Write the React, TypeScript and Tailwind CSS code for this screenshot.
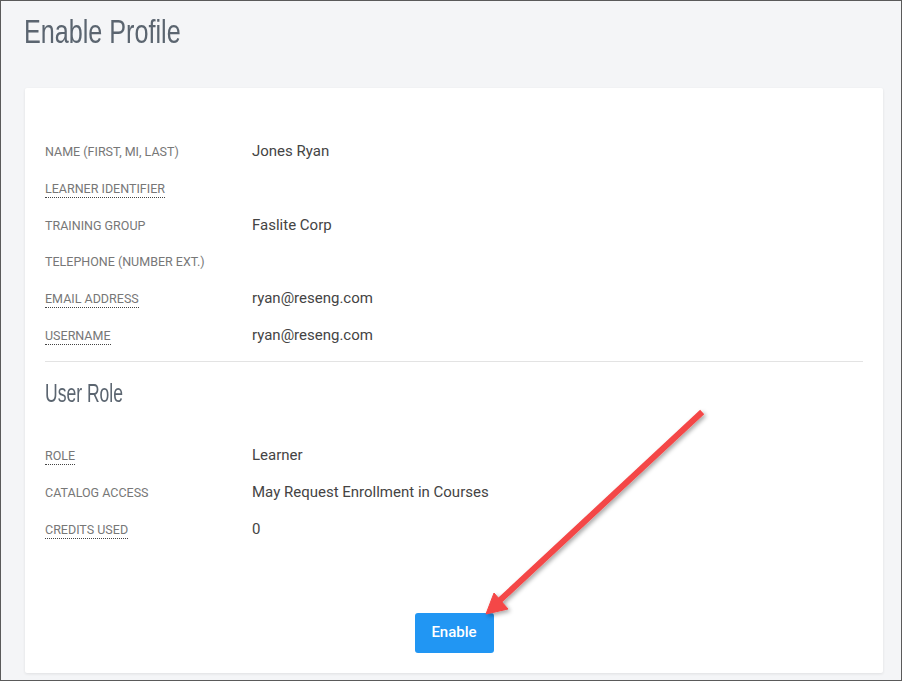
import React from 'react'

const profile = [
  { label: 'Name (First, MI, Last)', value: 'Jones Ryan', tip: false },
  { label: 'Learner Identifier', value: '', tip: true },
  { label: 'Training Group', value: 'Faslite Corp', tip: false },
  { label: 'Telephone (Number Ext.)', value: '', tip: false },
  { label: 'Email Address', value: 'ryan@reseng.com', tip: true },
  { label: 'Username', value: 'ryan@reseng.com', tip: true },
]

const role = [
  { label: 'Role', value: 'Learner', tip: true },
  { label: 'Catalog Access', value: 'May Request Enrollment in Courses', tip: false },
  { label: 'Credits Used', value: '0', tip: true },
]

function Row({ label, value, tip }: { label: string; value: string; tip: boolean }) {
  return (
    <div className="flex h-[36.8px] items-center">
      <div className="w-[207px] shrink-0">
        <span
          className={
            'inline-block text-[12.5px] uppercase leading-[14px] text-[#777] ' +
            (tip ? 'border-b border-dotted border-[#444] pb-[1px]' : 'pb-[2px]')
          }
        >
          {label}
        </span>
      </div>
      <div className="text-[15px] leading-[18px] text-[#444]">{value}</div>
    </div>
  )
}

function Arrow() {
  return (
    <svg className="pointer-events-none absolute inset-0" width="902" height="681">
      <defs>
        <filter id="sh" x="-20%" y="-20%" width="140%" height="140%">
          <feDropShadow dx="2" dy="2" stdDeviation="2" floodColor="#000" floodOpacity="0.35" />
        </filter>
      </defs>
      <g filter="url(#sh)" fill="#f44646" stroke="#f44646">
        <line x1="699" y1="413" x2="496" y2="602" strokeWidth="6" strokeLinecap="square" />
        <polygon points="485,613 493,592 507,608" strokeWidth="1" strokeLinejoin="round" />
      </g>
    </svg>
  )
}

export default function App() {
  return (
    <div className="relative box-border h-[681px] w-[902px] overflow-hidden border border-[#5a5a5a] bg-[#f4f5f7] font-['Roboto',sans-serif]">
      <h1 className="pl-[23px] pt-[13.4px] font-['Liberation_Sans',sans-serif] text-[34px] leading-[34px] text-[#5b6570]">
        <span className="inline-block origin-left scale-x-[0.74] whitespace-nowrap">Enable Profile</span>
      </h1>
      <div className="ml-6 mt-[39.6px] box-border w-[858px] rounded-[2px] bg-white px-5 pb-5 pt-[44.6px] shadow-[0_1px_3px_rgba(0,0,0,0.09)]">
        {profile.map((r) => (
          <Row key={r.label} {...r} />
        ))}
        <div className="mt-[7.6px] h-px bg-[#e3e3e3]" />
        <h2 className="mt-[18.3px] font-['Liberation_Sans',sans-serif] text-[26px] leading-[26px] text-[#5b6570]">
          <span className="inline-block origin-left scale-x-[0.675] whitespace-nowrap">User Role</span>
        </h2>
        <div className="mt-[30.3px]">
          {role.map((r) => (
            <Row key={r.label} {...r} />
          ))}
        </div>
        <div className="mt-[65.6px] flex justify-center">
          <button className="h-10 w-[79px] rounded-[3px] bg-[#2196f3] text-[15px] font-medium text-white">
            Enable
          </button>
        </div>
      </div>
      <Arrow />
    </div>
  )
}
